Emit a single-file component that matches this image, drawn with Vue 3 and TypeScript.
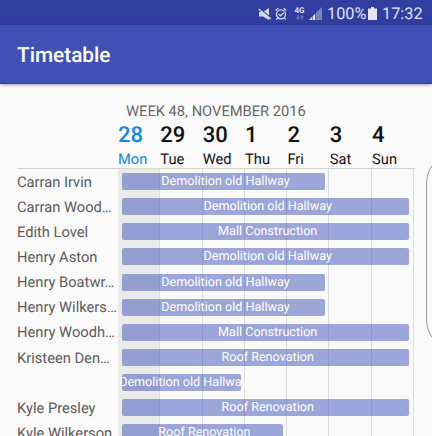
<script setup lang="ts">
interface Day { date: string; name: string; today?: boolean }
interface Row { person: string; task: string; days: number }

const days: Day[] = [
  { date: '28', name: 'Mon', today: true },
  { date: '29', name: 'Tue' },
  { date: '30', name: 'Wed' },
  { date: '1', name: 'Thu' },
  { date: '2', name: 'Fri' },
  { date: '3', name: 'Sat' },
  { date: '4', name: 'Sun' },
]

const hallway = 'Demolition old Hallway'
const mall = 'Mall Construction'
const roof = 'Roof Renovation'

const rows: Row[] = [
  { person: 'Carran Irvin', task: hallway, days: 5 },
  { person: 'Carran Wood…', task: hallway, days: 7 },
  { person: 'Edith Lovel', task: mall, days: 7 },
  { person: 'Henry Aston', task: hallway, days: 7 },
  { person: 'Henry Boatwr…', task: hallway, days: 5 },
  { person: 'Henry Wilkers…', task: hallway, days: 5 },
  { person: 'Henry Woodh…', task: mall, days: 7 },
  { person: 'Kristeen Den…', task: roof, days: 7 },
  { person: '', task: hallway, days: 3 },
  { person: 'Kyle Presley', task: roof, days: 7 },
  { person: 'Kyle Wilkerson', task: roof, days: 4 },
]

const barWidth = (n: number): string => `${n * 42.2 - 8}px`
</script>

<template>
  <div class="screen">
    <header class="status">
      <svg class="mute" viewBox="0 0 14 14">
        <path d="M1 5h4l6-4v12L5 9.500H1z" fill="#d5d8ee" />
        <path d="M1.500 1.500 13 11" stroke="#303f9f" stroke-width="1.500" />
        <path d="M.7 2 12.800 12" stroke="#d5d8ee" stroke-width="1.500" />
      </svg>
      <svg class="alarm" viewBox="0 0 12 14" fill="none" stroke="#d5d8ee" stroke-width="1.300">
        <circle cx="6" cy="7.300" r="4.500" />
        <path d="M.6 3.500 3.400 1.300M11.400 3.500 8.600 1.300M2.500 11 1.300 12.700M9.500 11l1.200 1.700M3.800 7.300l1.700 1.500L8.600 5.700" />
      </svg>
      <div class="network">
        <span>4G</span>
        <svg viewBox="0 0 8 5" fill="none" stroke="#8c94cb" stroke-width=".9">
          <path d="M2 0v4M.6 2.700 2 4.200l1.400-1.500M6 4.800v-4M4.600 2.200 6 .7l1.400 1.500" />
        </svg>
      </div>
      <svg class="signal" viewBox="0 0 13 13">
        <path d="M13 0v13H0z" fill="#7b84c3" />
        <path d="M6 7v6H0z" fill="#e2e4f4" />
        <path d="M3.500 8v5M6.500 5v8" stroke="#303f9f" stroke-width=".6" />
      </svg>
      <span class="percent">100%</span>
      <svg class="battery" viewBox="0 0 9 13"><path d="M3 0h3v1.500h3V13H0V1.500h3z" fill="#e4e6f4" /></svg>
      <span class="clock">17:32</span>
    </header>

    <div class="appbar"><h1>Timetable</h1></div>

    <main class="content">
      <div class="week">WEEK 48, NOVEMBER 2016</div>
      <div class="days">
        <div v-for="d in days" :key="d.date" class="day" :class="{ today: d.today }">
          <span class="date">{{ d.date }}</span>
          <span class="name">{{ d.name }}</span>
        </div>
      </div>
      <div class="table">
        <div class="lines">
          <i v-for="d in days" :key="d.date" :class="{ today: d.today }"></i>
        </div>
        <div v-for="(r, i) in rows" :key="i" class="row">
          <span class="person">{{ r.person }}</span>
          <div class="bar" :style="{ width: barWidth(r.days) }"><span>{{ r.task }}</span></div>
        </div>
      </div>
    </main>
    <div class="handle"></div>
  </div>
</template>

<style>
body { margin: 0; overflow: hidden; }
</style>

<style scoped>
.screen {
  position: relative;
  width: 432px;
  height: 436px;
  overflow: hidden;
  background: #fafafa;
  font-family: Roboto, "Liberation Sans", sans-serif;
  text-rendering: geometricPrecision;
}
.status {
  display: flex;
  align-items: center;
  box-sizing: border-box;
  height: 25px;
  padding: 2px 8px 0 258px;
  background: #303f9f;
  color: #dfe2f3;
}
.mute { width: 14px; height: 14px; flex: none; }
.alarm { width: 12px; height: 14px; flex: none; margin-left: 3px; }
.network {
  display: flex;
  flex-direction: column;
  align-items: center;
  width: 11px;
  flex: none;
  margin-left: 7px;
  font-size: 8px;
  font-weight: 700;
  line-height: 8px;
}
.network svg { width: 8px; height: 5px; }
.signal { width: 13px; height: 13px; flex: none; margin-left: 4px; }
.percent { width: 38px; flex: none; margin-left: 5px; font-size: 16.300px; white-space: nowrap; }
.battery { width: 9px; height: 13px; flex: none; margin-left: 3px; }
.clock { flex: none; margin-left: 5px; font-size: 16.300px; white-space: nowrap; }
.appbar {
  position: relative;
  display: flex;
  align-items: center;
  box-sizing: border-box;
  height: 59px;
  padding: 4px 17px 0;
  background: #3f51b5;
  border-bottom: 1px solid #303f9f;
  box-shadow: 0 1px 3px rgba(0, 0, 0, .35);
}
h1 { margin: 0; color: #fff; font-size: 20.800px; font-weight: 500; line-height: 24px; }
.content { padding: 18px 0 0 17px; }
.week { padding-left: 109px; color: #686868; font-size: 14.700px; line-height: 18px; white-space: nowrap; }
.days { display: flex; height: 48px; padding-left: 101px; }
.day { display: flex; flex-direction: column; width: 42.350px; flex: none; color: #111; }
.date { height: 29px; font-size: 22px; font-weight: 500; line-height: 32px; }
.name { font-size: 14.700px; line-height: 21px; }
.day.today { color: #1088f0; }
.table {
  position: relative;
  width: 398px;
  height: 280px;
  box-sizing: border-box;
  border-top: 1px solid #d4d4d4;
}
.lines {
  position: absolute;
  inset: 0 0 0 101px;
  display: flex;
  pointer-events: none;
}
.lines i {
  box-sizing: border-box;
  width: 42.250px;
  flex: none;
  border-right: 1px solid #dcdcdc;
}
.lines i.today { background: #ebebeb; }
.row { position: relative; display: flex; align-items: center; height: 25.150px; }
.person {
  width: 105px;
  flex: none;
  color: #5c5c5c;
  font-size: 14.700px;
  line-height: 20px;
  white-space: nowrap;
}
.bar {
  display: flex;
  justify-content: center;
  box-sizing: border-box;
  height: 17px;
  padding-left: 4px;
  border-radius: 2px;
  background: rgba(63, 81, 181, .5);
  color: #fff;
  font-size: 12.600px;
  line-height: 17px;
}
.bar span { flex: none; white-space: nowrap; }
.handle {
  position: absolute;
  left: 426px;
  top: 161px;
  width: 40px;
  height: 181px;
  box-sizing: border-box;
  border: 1px solid #999;
  border-radius: 14px / 24px;
}
</style>
